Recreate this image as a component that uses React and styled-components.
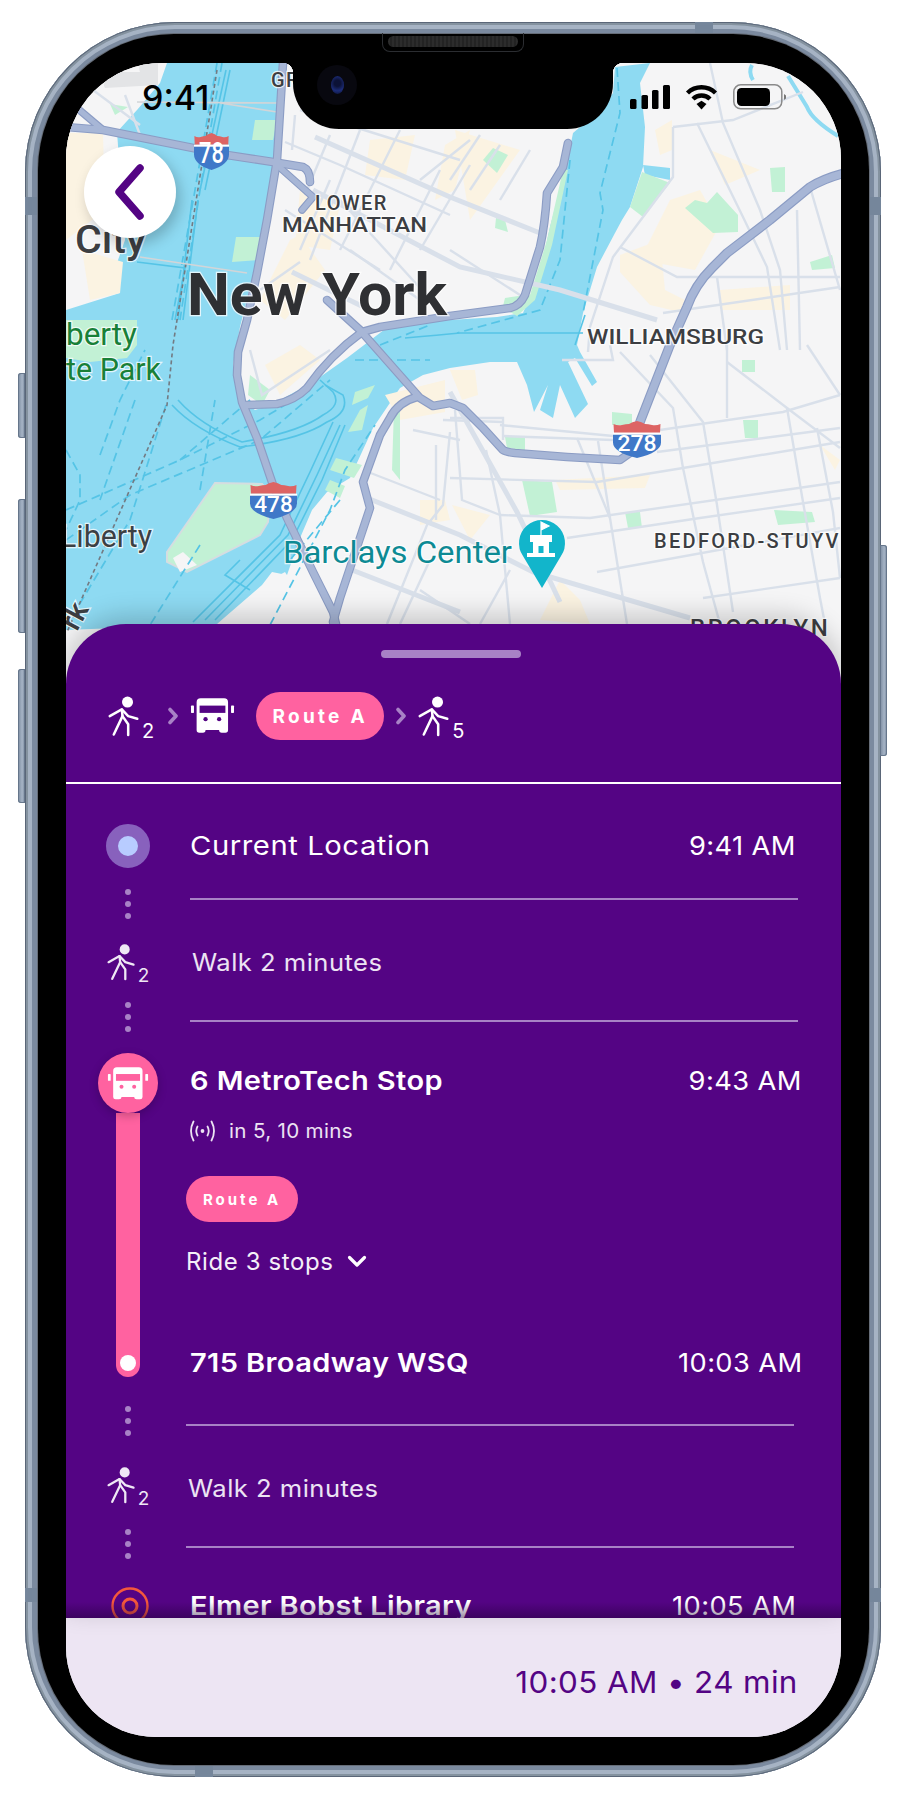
import React from "react";
import styled, { createGlobalStyle } from "styled-components";

const PURPLE = "#540484";
const PINK = "#ff62a0";
const LILAC = "#a882c6";
const SANS = `"Inter", "Noto Sans", "Liberation Sans", sans-serif`;

const Global = createGlobalStyle`
  html, body { margin: 0; padding: 0; background: #fff; }
  body { width: 906px; height: 1800px; overflow: hidden; font-family: ${SANS}; }
`;

const Page = styled.div`
  width: 906px;
  height: 1800px;
  padding: 22px 25px 23px;
  box-sizing: border-box;
`;
const Frame = styled.div`
  position: relative;
  height: 100%;
  box-sizing: border-box;
  padding: 12px 12px 12px 13px;
  border-radius: 150px;
  background: #8795aa;
  box-shadow: inset 0 0 0 1px #5a6678, inset 0 0 0 3px #84929f, inset 0 0 0 7px #a6b3c4, inset 0 0 0 12px #7b8a9f;
`;
const SideButton = styled.div`
  position: absolute;
  top: ${(p) => p.$top}px;
  height: ${(p) => p.$height}px;
  ${(p) => (p.$right ? "right: -6px; border-radius: 0 3px 3px 0;" : "left: -7px; border-radius: 3px 0 0 3px;")}
  width: 7px;
  background: linear-gradient(90deg, #7a8a9f, #a6b4c6 60%, #77879c);
  box-shadow: inset 0 0 0 1px #66768b;
`;
const Band = styled.div`
  position: absolute;
  background: #75869b;
  ${(p) => p.$css}
`;
const Bezel = styled.div`
  position: relative;
  height: 100%;
  box-sizing: border-box;
  padding: 29px 28px 28px;
  border-radius: 136px;
  background: #000;
  box-shadow: 0 0 0 1px #666d78;
`;
const Speaker = styled.div`
  position: absolute;
  top: -1px;
  left: 344px;
  width: 142px;
  height: 19px;
  box-sizing: border-box;
  padding: 3px 5px 4px;
  border: 1px solid #2b2d31;
  border-top: 0;
  border-radius: 0 0 8px 8px;
  &::after {
    content: "";
    display: block;
    height: 100%;
    border-radius: 6px;
    background: repeating-linear-gradient(90deg, #2c2c2c 0 2px, #232323 2px 4px);
  }
`;
const Screen = styled.div`
  position: relative;
  height: 100%;
  overflow: hidden;
  display: flex;
  flex-direction: column;
  border-radius: 96px 96px 90px 90px;
  background: #f5f5f6;
`;
const MapArea = styled.div`
  height: 621px;
  flex: none;
  margin-bottom: -60px;
  svg { display: block; }
`;
const Notch = styled.div`
  position: absolute;
  top: 0;
  left: 227px;
  width: 320px;
  height: 66px;
  background: #000;
  border-radius: 0 0 46px 46px;
  &::before, &::after {
    content: "";
    position: absolute;
    top: 0;
    width: 10px;
    height: 10px;
  }
  &::before { left: -10px; background: radial-gradient(circle at 0 100%, transparent 10px, #000 10.5px); }
  &::after { right: -10px; background: radial-gradient(circle at 100% 100%, transparent 10px, #000 10.5px); }
`;
const Camera = styled.div`
  position: absolute;
  top: 2px;
  left: 24px;
  width: 40px;
  height: 40px;
  border-radius: 50%;
  background: #08080f;
  display: flex;
  align-items: center;
  justify-content: center;
  &::after {
    content: "";
    width: 13px;
    height: 18px;
    border-radius: 50%;
    background: radial-gradient(circle at 50% 40%, #0c1236 25%, #1c2c78 60%, #0a0f2a 100%);
  }
`;
const StatusBar = styled.div`
  position: absolute;
  top: 19px;
  left: 76px;
  right: 55px;
  height: 30px;
  display: flex;
  align-items: center;
  justify-content: space-between;
`;
const Clock = styled.span`
  font-family: "Inter", sans-serif;
  font-size: 34px;
  font-weight: 500;
  color: #000;
`;
const StatusIcons = styled.div`
  display: flex;
  align-items: center;
  gap: 15px;
`;
const BackButton = styled.button`
  position: absolute;
  top: 83px;
  left: 18px;
  width: 92px;
  height: 92px;
  padding: 0;
  border: 0;
  border-radius: 50%;
  background: #fff;
  box-shadow: 4px 6px 14px rgba(0, 0, 0, 0.22);
  display: flex;
  align-items: center;
  justify-content: center;
`;
const Sheet = styled.section`
  position: relative;
  flex: 1;
  min-height: 0;
  display: flex;
  flex-direction: column;
  background: ${PURPLE};
  border-radius: 60px 60px 0 0;
  box-shadow: 0 -8px 26px rgba(0, 0, 0, 0.2);
  color: #fff;
`;
const Handle = styled.div`
  width: 140px;
  height: 8px;
  margin: 26px 0 0 315px;
  border-radius: 4px;
  background: ${LILAC};
`;
const Summary = styled.div`
  display: flex;
  align-items: center;
  gap: 12px;
  height: 48px;
  margin-top: 34px;
  padding: 0 0 42px 42px;
  border-bottom: 2px solid #fff;
`;
const Pill = styled.span`
  display: inline-flex;
  align-items: center;
  justify-content: center;
  box-sizing: border-box;
  border-radius: 24px;
  background: ${PINK};
  color: #fff;
  font-weight: 700;
  white-space: nowrap;
`;
const SummaryPill = styled(Pill)`
  width: 128px;
  height: 48px;
  margin-left: 9px;
  font-size: 19px;
  letter-spacing: 3.3px;
`;
const StopPill = styled(Pill)`
  width: 112px;
  height: 46px;
  margin-top: ${(p) => p.$top}px;
  font-size: 15px;
  letter-spacing: 3px;
`;
const WalkWrap = styled.span`
  display: inline-flex;
  align-items: flex-end;
  flex: none;
  gap: 2px;
  margin-top: ${(p) => p.$top || 0}px;
  color: ${(p) => p.$color || "#fff"};
  svg { display: block; }
`;
const WalkCount = styled.span`
  font-size: ${(p) => (p.$small ? 19 : 20)}px;
  line-height: 15px;
  font-weight: 400;
  margin-bottom: -2px;
`;
const ChevronSvg = styled.svg`
  flex: none;
  margin-left: ${(p) => p.$left || 0}px;
`;
const Timeline = styled.div`
  position: relative;
  flex: 1;
  min-height: 0;
  overflow: hidden;
  display: grid;
  grid-template-columns: 120px 616px;
  align-items: start;
`;
const Rail = styled.div`
  box-sizing: border-box;
  padding-left: 4px;
  display: flex;
  flex-direction: column;
  align-items: center;
`;
const LocationDot = styled.div`
  width: 44px;
  height: 44px;
  margin-top: ${(p) => p.$top}px;
  box-sizing: border-box;
  border: 12px solid #8861bd;
  border-radius: 50%;
  background: #b8ccff;
`;
const Dots = styled.div`
  display: flex;
  flex-direction: column;
  gap: 6px;
  margin-top: ${(p) => p.$top}px;
  i {
    display: block;
    width: 6px;
    height: 6px;
    border-radius: 50%;
    background: ${LILAC};
  }
`;
const RideTrack = styled.div`
  display: flex;
  flex-direction: column;
  align-items: center;
  margin-top: ${(p) => p.$top}px;
`;
const BusBadge = styled.div`
  position: relative;
  z-index: 1;
  width: 60px;
  height: 60px;
  border-radius: 50%;
  background: ${PINK};
  box-shadow: 0 3px 10px rgba(0, 0, 0, 0.22);
  display: flex;
  align-items: center;
  justify-content: center;
`;
const RideBar = styled.div`
  width: 24px;
  height: 264px;
  box-sizing: border-box;
  padding-bottom: 6px;
  border-radius: 0 0 12px 12px;
  background: ${PINK};
  display: flex;
  flex-direction: column;
  justify-content: flex-end;
  align-items: center;
  &::after {
    content: "";
    width: 16px;
    height: 16px;
    border-radius: 50%;
    background: #fff;
  }
`;
const TargetIcon = styled.svg`
  display: block;
  flex: none;
  margin-top: ${(p) => p.$top}px;
  margin-left: 3px;
`;
const Details = styled.div`
  display: flex;
  flex-direction: column;
  align-items: flex-start;
`;
/* The reference's geometric face runs wider than any installed font; stretch the glyphs to match. */
const Wide = styled.span`
  display: inline-block;
  transform: scaleX(${(p) => p.$x});
  transform-origin: ${(p) => p.$origin || "left"} center;
`;
const StopRow = styled.div`
  align-self: stretch;
  display: flex;
  align-items: center;
  justify-content: space-between;
  height: ${(p) => p.$height || 36}px;
  margin-top: ${(p) => p.$top}px;
  padding: 0 ${(p) => p.$right || 0}px 0 4px;
  font-size: 26px;
  font-weight: ${(p) => (p.$bold ? 600 : 400)};
  letter-spacing: ${(p) => (p.$bold ? 0.35 : 0.5)}px;
  white-space: nowrap;
`;
const StopName = ({ bold, children }) => <Wide $x={bold ? 1.115 : 1.124}>{children}</Wide>;
const StopTime = styled(Wide).attrs({ $x: 1.05, $origin: "right" })`
  font-weight: 400;
  letter-spacing: 0.35px;
`;
const Rule = styled.div`
  height: 2px;
  width: 608px;
  margin-top: ${(p) => p.$top}px;
  margin-left: ${(p) => p.$left || 0}px;
  background: ${LILAC};
`;
const WalkLine = styled.div`
  height: 30px;
  margin-top: ${(p) => p.$top}px;
  margin-left: ${(p) => p.$left}px;
  display: flex;
  align-items: center;
  font-size: 24px;
  letter-spacing: 0.45px;
  color: #ece3f3;
  white-space: nowrap;
`;
const EtaRow = styled.div`
  height: 24px;
  margin-top: ${(p) => p.$top}px;
  margin-left: 3px;
  display: flex;
  align-items: center;
  gap: 13px;
  font-size: 20px;
  letter-spacing: 0.3px;
  color: #ece3f3;
  white-space: nowrap;
`;
const RideToggle = styled.button`
  height: 30px;
  margin-top: ${(p) => p.$top}px;
  padding: 0;
  border: 0;
  background: none;
  color: #f4eff8;
  font: 400 24px ${SANS};
  letter-spacing: 0.6px;
  display: flex;
  align-items: center;
  gap: 13px;
`;
const ScrollFade = styled.div`
  position: absolute;
  left: 0;
  right: 0;
  bottom: 0;
  height: 16px;
  background: linear-gradient(rgba(30, 0, 50, 0), rgba(30, 0, 50, 0.45));
`;
const Footer = styled.footer`
  flex: none;
  height: 119px;
  box-sizing: border-box;
  padding: 8px 43px 0 0;
  background: #ede5f3;
  display: flex;
  align-items: center;
  justify-content: flex-end;
  color: ${PURPLE};
  font-size: 30px;
  letter-spacing: 0.35px;
  white-space: nowrap;
`;

/* ---------- icons ---------- */
const WalkFigure = ({ size }) => (
  <svg width={size} height={size * 1.31} viewBox="145 225 95 125" fill="none" stroke="currentColor" strokeWidth="7.5" strokeLinecap="round" strokeLinejoin="round">
    <circle cx="203" cy="246" r="16.5" fill="currentColor" stroke="none" />
    <path d="M150 288 L186 268 L205 288 L232 296" />
    <path d="M186 268 L188 288 L162 343" />
    <path d="M188 288 L205 312 L205 344" />
  </svg>
);
const Walk = ({ n, small, top, color }) => (
  <WalkWrap $top={top} $color={color}>
    <WalkFigure size={small ? 29 : 32} />
    <WalkCount $small={small}>{n}</WalkCount>
  </WalkWrap>
);
const Chevron = ({ left }) => (
  <ChevronSvg $left={left} width="10" height="18" viewBox="0 0 10 18" fill="none" stroke={LILAC} strokeWidth="3.6" strokeLinecap="round" strokeLinejoin="round">
    <path d="M2 2.5 L8 9 L2 15.5" />
  </ChevronSvg>
);
const Bus = ({ width, cut }) => (
  <svg width={width} height={width * 0.824} viewBox="385 232 136 112" style={{ flex: "none", display: "block" }}>
    <rect x="388" y="258" width="9" height="22" rx="2" fill="#fff" />
    <rect x="509" y="258" width="9" height="22" rx="2" fill="#fff" />
    <path d="M417 236 H488 Q500 236 500 248 V332 Q500 340 492 340 H481 Q473 340 473 332 H432 Q432 340 424 340 H413 Q405 340 405 332 V248 Q405 236 417 236 Z" fill="#fff" />
    <rect x="414" y="258" width="78" height="22" fill={cut} />
    <circle cx="432" cy="299" r="6.5" fill={cut} />
    <circle cx="473" cy="299" r="6.5" fill={cut} />
  </svg>
);
const Signal = () => (
  <svg width="27" height="24" viewBox="0 0 27 24" fill="none" stroke="#ece3f3" strokeWidth="1.8" strokeLinecap="round">
    <circle cx="13.5" cy="12" r="1.9" fill="#ece3f3" stroke="none" />
    <path d="M8.5 7.5 Q6 12 8.5 16.5 M18.5 7.5 Q21 12 18.5 16.5" />
    <path d="M4.5 2.5 Q-0.5 12 4.5 21.5 M22.5 2.5 Q27.5 12 22.5 21.5" />
  </svg>
);
const StatusSignal = () => (
  <svg width="40" height="24" viewBox="0 0 40 24">
    <rect x="0" y="14" width="6.5" height="10" rx="1.5" />
    <rect x="11.5" y="10" width="6.5" height="14" rx="1.5" />
    <rect x="22" y="5" width="6.5" height="19" rx="1.5" />
    <rect x="33" y="0" width="7" height="24" rx="1.5" />
  </svg>
);
const StatusWifi = () => (
  <svg width="33" height="25" viewBox="0 0 33 25">
    <path d="M2.5 8 A20 20 0 0 1 30.5 8" fill="none" stroke="#000" strokeWidth="4.4" strokeLinecap="butt" />
    <path d="M8 14 A12 12 0 0 1 25 14" fill="none" stroke="#000" strokeWidth="4.4" />
    <path d="M11.5 19 L16.5 15.8 L21.5 19 L16.5 24.5 Z" />
  </svg>
);
const StatusBattery = () => (
  <svg width="53" height="26" viewBox="0 0 53 26">
    <rect x="0.8" y="0.8" width="48" height="24" rx="7" fill="none" stroke="#8a8a8a" strokeWidth="1.5" />
    <rect x="4" y="4" width="33" height="18" rx="4.5" fill="#000" />
    <path d="M51 10 L53 11.5 V14.5 L51 16 Z" fill="#777" />
  </svg>
);

/* ---------- map ---------- */
const WATER = "M167 63 L282 63 L280 110 L277 160 L267 210 L262 240 L240 327 L233 365 L243 402 L255 410 L273 404 L313 382 L347 358 L393 323 L450 320 L497 317 L523 313 L540 273 L550 227 L567 163 L573 133 L600 110 L613 93 L615 67 L650 63 L640 83 L645 127 L643 167 L630 207 L622 220 L615 233 L597 267 L583 313 L577 345 L580 352 L597 382 L592 386 L575 358 L568 362 L588 404 L575 418 L560 385 L553 418 L540 410 L548 385 L534 412 L527 385 L517 362 L490 362 L450 368 L423 375 L400 388 L373 428 L350 478 L327 492 L312 510 L300 538 L287 575 L272 572 L262 585 L217 624 L66 630 L66 310 L120 293 L117 263 L125 240 L117 132 L137 110 L160 83 Z";
const HIGHWAYS = [
  { w: 7, d: "M66 127 L103 130 L143 138 L193 148 L227 155 L273 162 L303 167 Q310 170 310 182" },
  { w: 6, d: "M77 108 L103 130" },
  { w: 6, d: "M277 165 L313 197 L302 210" },
  { w: 7, d: "M283 63 L277 160 L267 220 L257 273 L247 320 L238 352 L237 375 L242 402 L257 438 L273 485 L287 518 L313 572 L333 612 L337 628" },
  { w: 7, d: "M246 405 L277 404 Q295 400 307 388 Q330 355 362 332 L380 327 L450 316 L510 308 Q520 306 525 295 L540 247 Q545 225 547 193 L563 167 L568 143" },
  { w: 7, d: "M327 300 L360 330 L420 398 L433 406 L450 403 L463 408 L483 428 L503 450 Q506 452 515 453 L567 457 L620 460 L637 448" },
  { w: 7, d: "M417 397 Q398 402 390 418 L380 435 L363 482 L370 508 L360 538 L340 598 L333 622" },
  { w: 8, d: "M640 422 L670 345 L687 307 Q695 285 712 268 L727 253 L770 220 L810 187 Q825 178 845 173" },
];
const WIDE_STREETS = [
  "M315 137 L450 197 L540 233",
  "M313 190 L460 267 L560 290 L657 320",
  "M367 498 L460 535 L533 572 L690 618",
  "M450 392 L517 512 L560 602",
  "M352 570 L460 612",
  "M292 272 L380 315",
];
const STREETS = [
  "M450 418 L503 418 L503 440", "M503 436 L613 440", "M450 478 L597 482 L683 468 L840 442",
  "M660 430 L783 412 L840 395", "M657 452 L840 428", "M500 515 L590 518 L840 482",
  "M567 538 L700 518 L840 498", "M597 572 L840 528", "M703 598 L840 578",
  "M620 352 L673 408 L683 468 L703 562 L720 624", "M650 355 L703 422 L717 505 L733 612",
  "M577 438 L610 518 L627 624", "M598 441 L610 518", "M787 408 L803 502 L820 598 L825 624",
  "M817 428 L833 512 L840 578", "M727 362 L787 408 L840 448", "M727 345 L727 418",
  "M807 345 L840 395", "M673 127 L733 120 L803 92", "M673 127 L673 177 L613 257 L590 327 L588 352",
  "M710 63 L723 123 L760 210 L780 270 L787 350", "M697 123 L743 217 L767 267 L780 350",
  "M620 247 L677 277 L840 277", "M663 313 L840 287", "M797 210 L800 350", "M717 277 L727 350",
  "M810 187 L840 290", "M450 432 L443 505 L427 525 L387 624", "M443 420 L503 422",
  "M413 430 L460 440", "M436 445 L436 520", "M455 410 L462 500 L500 515", "M486 450 L500 515 L510 624",
  "M363 470 L440 500", "M420 590 L470 624", "M430 560 L400 624", "M510 570 L480 624",
  "M300 110 L460 160", "M285 142 L340 165 L450 215", "M285 210 L380 270", "M330 180 L300 250",
  "M360 130 L310 260", "M400 130 L340 250", "M440 170 L390 270", "M340 200 L440 310",
  "M295 115 L292 150", "M330 135 L305 195", "M420 180 L470 140", "M260 290 L300 262",
  "M350 250 L420 300", "M420 250 L470 165", "M450 180 L480 135", "M500 145 L470 190",
  "M530 150 L500 200", "M450 250 L520 295", "M250 350 L262 395 L330 350", "M562 360 L613 360 L610 345",
  "M500 425 L613 436", "M66 70 L140 125", "M125 95 L140 135",
];
const TAN = [
  "M66 133 L103 133 L105 210 L66 240 Z", "M82 250 L123 262 L120 293 L90 300 Z",
  "M260 300 L290 240 L300 235 L325 270 L285 320 Z", "M300 190 L340 205 L330 250 L295 245 Z",
  "M370 140 L415 135 L405 180 L365 175 Z", "M445 145 L470 130 L455 190 L435 200 Z",
  "M455 130 L520 150 L470 220 Z", "M265 365 L300 345 L320 360 L280 395 Z",
  "M670 200 L700 190 L720 225 L695 270 L640 260 Z", "M620 255 L660 240 L665 290 L685 300 L680 312 L650 305 L620 272 Z",
  "M710 150 L760 170 L725 185 Z", "M720 290 L790 285 L790 310 L722 310 Z",
  "M655 130 L672 120 L672 150 L660 155 Z", "M420 500 L445 500 L450 520 L420 525 Z",
  "M450 370 L475 370 L478 395 L462 400 Z", "M540 620 L560 580 L580 600 L590 624 Z",
  "M555 480 L650 475 L645 488 L560 490 Z", "M820 445 L840 460 L835 470 Z",
  "M385 395 L445 380 L445 412 L400 420 Z", "M452 505 L490 515 L470 540 Z",
];
const GREEN = [
  "M642 172 L670 183 L643 217 L630 207 Z", "M685 208 L695 200 L707 203 L717 192 L727 203 L738 215 L738 232 L713 233 Z",
  "M483 160 L493 148 L508 155 L497 173 Z", "M770 168 L785 167 L785 192 L772 192 Z",
  "M810 262 L832 255 L835 268 L812 270 Z", "M496 218 L505 220 L508 232 L495 228 Z",
  "M563 170 L568 170 L552 245 L535 300 L517 316 L510 312 L530 295 L547 240 Z", "M505 298 L525 295 L515 306 L503 306 Z",
  "M255 120 L277 120 L273 140 L252 140 Z", "M236 237 L260 237 L258 260 L232 262 Z",
  "M110 104 L128 107 L115 115 Z",
  "M66 320 L137 320 L137 345 L127 358 L90 362 L66 358 Z", "M522 480 L552 482 L557 512 L530 516 Z",
  "M505 437 L525 437 L525 450 L507 448 Z", "M774 510 L812 512 L815 522 L778 525 Z",
  "M743 420 L758 420 L758 438 L745 438 Z", "M612 412 L632 414 L632 425 L612 425 Z",
  "M625 512 L640 512 L642 528 L628 528 Z", "M742 360 L755 360 L755 372 L742 372 Z",
  "M355 392 L375 385 L368 398 L352 405 Z", "M360 410 L368 405 L362 430 L348 432 Z",
  "M336 458 L362 465 L354 478 L330 470 Z", "M330 480 L345 486 L340 498 L325 490 Z",
  "M250 375 L270 390 L262 405 L248 395 Z", "M394 408 L400 408 L400 480 L392 470 Z",
];
const WATER_SOLID = [
  "M192 200 L178 320", "M198 200 L183 320", "M230 70 L205 190", "M226 70 L200 190",
  "M172 405 Q195 430 240 447 Q300 440 327 422 Q350 412 343 395 L325 385",
  "M178 400 Q200 425 242 442 Q300 432 323 415 Q342 405 333 392 L320 380",
  "M333 422 L310 472 L280 535 L193 622", "M340 425 L317 475 L288 535 L205 620",
  "M345 425 L322 480 L292 540 L215 620", "M585 315 L575 345", "M583 333 L460 333 Q440 335 405 338",
  "M137 262 L185 268 L175 320", "M240 560 L225 575 L250 590",
];
const WATER_DASHED = [
  "M217 63 L195 190 L172 320", "M222 63 L200 190 L180 320", "M166 405 L130 520 L70 620",
  "M135 400 L100 500", "M66 450 L80 475 L80 500 L66 530", "M66 540 L130 495 L260 440 L330 380",
  "M66 510 L180 460 L260 420 L310 390", "M200 545 L150 625", "M250 400 L180 460",
  "M200 490 L215 400", "M617 68 L620 113 L600 193 L603 210 L583 313", "M570 160 L560 260 L540 310 L457 333",
  "M340 500 L290 560", "M355 360 L430 360", "M100 455 L120 400 L145 350", "M270 625 L330 510 L345 470 L375 425",
  "M380 345 L430 325",
];
const PIERS = [
  "M328 498 L355 506 L351 516 L324 508 Z", "M320 512 L338 520 L334 530 L316 522 Z",
  "M310 525 L326 532 L322 540 L306 534 Z", "M303 538 L318 545 L313 552 L298 545 Z",
  "M270 580 L285 572 L290 580 L262 605 L258 598 Z",
];

const Shield = ({ x, y, w, h, label, size }) => (
  <g transform={`translate(${x} ${y}) scale(${w / 48} ${h / 38})`}>
    <path d="M1 12 L0.5 3 Q5 5 9 4 Q13 3 16 3 Q19 1 24 0 Q29 1 32 3 Q35 3 39 4 Q43 5 47.5 3 L47 12 Z" fill="#dd6464" />
    <rect x="0" y="12" width="48" height="2.2" fill="#fff" />
    <path d="M0 14.2 H48 V22 Q48 32 24 38 Q0 32 0 22 Z" fill="#3f78c8" />
    <text x="24" y="31" textAnchor="middle" fontFamily="Roboto, sans-serif" fontWeight="500" fontSize={size} fill="#fff">{label}</text>
  </g>
);

const Label = styled.text.attrs({ lengthAdjust: "spacingAndGlyphs" })`
  font-family: Roboto, "Liberation Sans", sans-serif;
  font-size: ${(p) => p.$size}px;
  font-weight: ${(p) => p.$weight || 500};
  fill: ${(p) => p.$fill || "#3c3e42"};
  letter-spacing: ${(p) => p.$ls || 0}px;
  stroke: #fff;
  stroke-width: 2.5px;
  stroke-opacity: 0.75;
  paint-order: stroke;
`;

const NewYorkMap = () => (
  <svg width="775" height="621" viewBox="66 63 775 621">
    <rect x="66" y="63" width="775" height="621" fill="#f5f5f6" />
    <path d={WATER} fill="#8edaf2" />
    <path d="M140 72 Q135 60 158 63 L158 85 L105 88 Q100 80 115 72 Z" fill="#e3e4e6" />
    <path d="M752 65 Q748 72 753 80" fill="none" stroke="#8edaf2" strokeWidth="4" />
    <path d="M788 76 L807 107 Q812 120 838 136" fill="none" stroke="#8edaf2" strokeWidth="4" />
    <path d="M643 165 L670 168 L670 180 L645 175 Z" fill="#8edaf2" />
    {TAN.map((d) => <path key={d} d={d} fill="#fbf3e2" />)}
    {GREEN.map((d) => <path key={d} d={d} fill="#c2f1d5" />)}
    {PIERS.map((d) => <path key={d} d={d} fill="#f5f5f6" />)}
    <path d="M215 483 L262 484 L270 492 L268 522 L260 535 L187 572 L167 562 L167 552 Z" fill="#c2f1d5" stroke="#d5dde0" strokeWidth="2" />
    <path d="M173 558 L183 552 L197 565 L180 572 Z" fill="#f5f5f6" />
    <g fill="none" stroke="#55c4e6" strokeWidth="1.6">
      {WATER_SOLID.map((d) => <path key={d} d={d} />)}
    </g>
    <g fill="none" stroke="#55c4e6" strokeWidth="1.7" strokeDasharray="9 5">
      {WATER_DASHED.map((d) => <path key={d} d={d} />)}
    </g>
    <path d="M217 70 L173 345 L167 405 L120 512 L67 632" fill="none" stroke="#737a82" strokeWidth="1.6" strokeDasharray="4 3" />
    <g fill="none" stroke="#d2d5d8" strokeWidth="1.6">
      <path d="M137 102 L277 103 M220 103 L277 112 M140 257 L247 273" />
    </g>
    <g fill="none" stroke="#d9e0ea" strokeWidth="5">
      {WIDE_STREETS.map((d) => <path key={d} d={d} />)}
    </g>
    <g fill="none" stroke="#d9e0ea" strokeWidth="2.4">
      {STREETS.map((d) => <path key={d} d={d} />)}
    </g>
    <g fill="none" strokeLinecap="round" strokeLinejoin="round">
      {HIGHWAYS.map((h) => <path key={h.d} d={h.d} stroke="#8b9cc4" strokeWidth={h.w + 1.6} />)}
      {HIGHWAYS.map((h) => <path key={h.d} d={h.d} stroke="#a7b6d6" strokeWidth={h.w - 0.6} />)}
    </g>
    <Shield x={194} y={133} w={35} h={37} label="78" size={30} />
    <Shield x={250} y={482} w={47} h={37} label="478" size={23} />
    <Shield x={613} y={421} w={48} h={37} label="278" size={23} />

    <Label x="187" y="315" $size={60} $weight={700} $fill="#2f3033" textLength="260">New York</Label>
    <Label x="75" y="253" $size={38} $fill="#3c3e42" textLength="71">City</Label>
    <Label x="315" y="210" $size={20} $ls={1.5}>LOWER</Label>
    <Label x="282" y="232" $size={20} textLength="145">MANHATTAN</Label>
    <Label x="271" y="87" $size={20} $ls={1.5}>GR</Label>
    <Label x="587" y="344" $size={20} textLength="177">WILLIAMSBURG</Label>
    <Label x="66" y="345" $size={32} $weight={400} $fill="#188038" textLength="71">berty</Label>
    <Label x="66" y="380" $size={32} $weight={400} $fill="#188038" textLength="95">te Park</Label>
    <Label x="60" y="547" $size={32} $weight={400} $fill="#3c4043" textLength="92">Liberty</Label>
    <Label x="283" y="563" $size={32} $weight={400} $fill="#0d8a94" textLength="229">Barclays Center</Label>
    <Label x="654" y="548" $size={20} $ls={2.3}>BEDFORD-STUYV</Label>
    <Label x="690" y="636" $size={24} $ls={2.5}>BROOKLYN</Label>
    <Label transform="translate(77 632) rotate(-62)" x="0" y="0" $size={30}>rk</Label>

    <g>
      <path d="M542 588 L523 556 A23 23 0 1 1 561 556 Z" fill="#12b5cb" />
      <path d="M541 522 V535 M541 522 L549 526 L541 530 Z" fill="#fff" stroke="#fff" strokeWidth="1.2" />
      <path d="M530 535 H552 V542 H549 V553 H555 V557 H527 V553 H533 V542 H530 Z" fill="#fff" />
      <rect x="538.5" y="546" width="5" height="7" fill="#12b5cb" />
    </g>
  </svg>
);

const DotTrail = ({ top }) => (
  <Dots $top={top}><i /><i /><i /></Dots>
);

export default function App() {
  return (
    <Page>
      <Global />
      <Frame>
        <SideButton $top={351} $height={65} />
        <SideButton $top={477} $height={134} />
        <SideButton $top={647} $height={134} />
        <SideButton $right $top={523} $height={211} />
        <Band $css="top: 0; left: 670px; width: 18px; height: 12px;" />
        <Band $css="bottom: 0; left: 170px; width: 18px; height: 12px;" />
        <Band $css="left: 0; top: 175px; width: 13px; height: 18px;" />
        <Band $css="right: 0; top: 175px; width: 12px; height: 18px;" />
        <Band $css="left: 0; bottom: 175px; width: 13px; height: 14px;" />
        <Band $css="right: 0; bottom: 175px; width: 12px; height: 14px;" />
        <Bezel>
          <Speaker />
          <Screen>
            <MapArea>
              <NewYorkMap />
            </MapArea>
            <Notch>
              <Camera />
            </Notch>
            <StatusBar>
              <Clock>9:41</Clock>
              <StatusIcons>
                <StatusSignal />
                <StatusWifi />
                <StatusBattery />
              </StatusIcons>
            </StatusBar>
            <BackButton aria-label="Back">
              <svg width="36" height="58" viewBox="0 0 36 58" fill="none" stroke={PURPLE} strokeWidth="7.5" strokeLinecap="round" strokeLinejoin="round">
                <path d="M28 5 L7 29 L28 53" />
              </svg>
            </BackButton>
            <Sheet>
              <Handle />
              <Summary>
                <Walk n="2" />
                <Chevron left={2} />
                <Bus width={45} cut={PURPLE} />
                <SummaryPill>Route A</SummaryPill>
                <Chevron />
                <Walk n="5" />
              </Summary>
              <Timeline>
                <Rail>
                  <LocationDot $top={40} />
                  <DotTrail top={21} />
                  <Walk n="2" small top={24} color="#efe8f5" />
                  <DotTrail top={21} />
                  <RideTrack $top={21}>
                    <BusBadge>
                      <Bus width={42} cut={PINK} />
                    </BusBadge>
                    <RideBar />
                  </RideTrack>
                  <DotTrail top={29} />
                  <Walk n="2" small top={30} color="#efe8f5" />
                  <DotTrail top={25} />
                  <TargetIcon $top={28} width="38" height="38" viewBox="0 0 38 38" fill="none" stroke="#f4583c">
                    <circle cx="19" cy="19" r="17.5" strokeWidth="2.4" />
                    <circle cx="19" cy="19" r="7" strokeWidth="3" />
                  </TargetIcon>
                </Rail>
                <Details>
                  <StopRow $top={39} $height={44} $right={6}>
                    <StopName>Current Location</StopName>
                    <StopTime>9:41 AM</StopTime>
                  </StopRow>
                  <Rule $top={31} $left={4} />
                  <WalkLine $top={47} $left={6}><Wide $x={1.065}>Walk 2 minutes</Wide></WalkLine>
                  <Rule $top={43} $left={4} />
                  <StopRow $top={40} $bold>
                    <StopName bold>6 MetroTech Stop</StopName>
                    <StopTime>9:43 AM</StopTime>
                  </StopRow>
                  <EtaRow $top={21}>
                    <Signal />
                    <Wide $x={1.03}>in 5, 10 mins</Wide>
                  </EtaRow>
                  <StopPill $top={33}>Route A</StopPill>
                  <RideToggle $top={24}>
                    Ride 3 stops
                    <svg width="20" height="13" viewBox="0 0 20 13" fill="none" stroke="#fff" strokeWidth="3.2" strokeLinecap="round" strokeLinejoin="round">
                      <path d="M2.5 2.5 L10 10 L17.5 2.5" />
                    </svg>
                  </RideToggle>
                  <StopRow $top={68} $bold>
                    <StopName bold>715 Broadway WSQ</StopName>
                    <StopTime>10:03 AM</StopTime>
                  </StopRow>
                  <Rule $top={44} />
                  <WalkLine $top={47} $left={2}><Wide $x={1.065}>Walk 2 minutes</Wide></WalkLine>
                  <Rule $top={43} />
                  <StopRow $top={39} $bold $right={6}>
                    <StopName bold>Elmer Bobst Library</StopName>
                    <StopTime>10:05 AM</StopTime>
                  </StopRow>
                </Details>
                <ScrollFade />
              </Timeline>
            </Sheet>
            <Footer><Wide $x={1.047} $origin="right">10:05 AM • 24 min</Wide></Footer>
          </Screen>
        </Bezel>
      </Frame>
    </Page>
  );
}
